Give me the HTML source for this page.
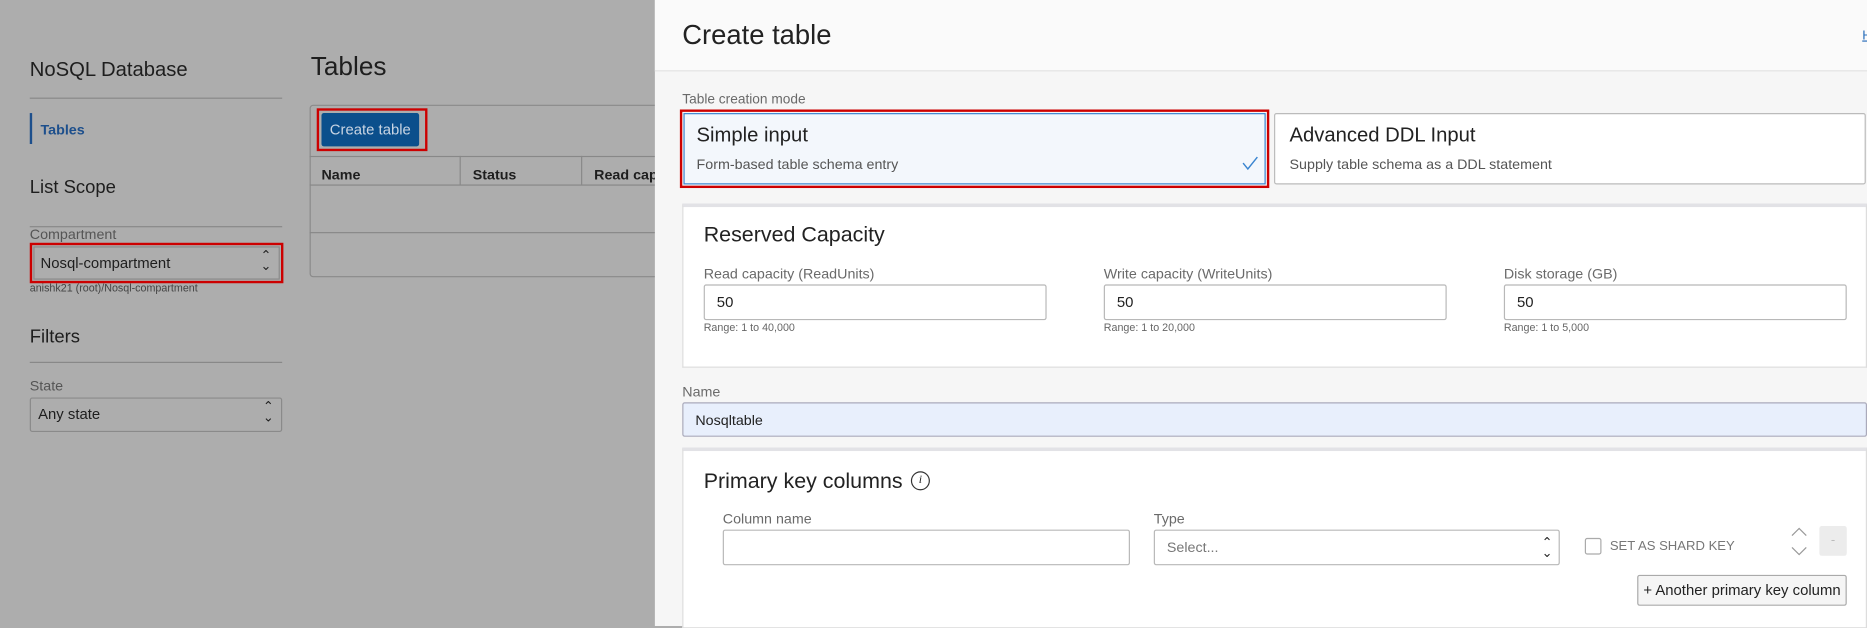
<!DOCTYPE html>
<html><head><meta charset="utf-8"><style>
*{box-sizing:border-box;margin:0;padding:0}
html,body{width:1867px;height:626px;overflow:hidden;background:#adadad;font-family:"Liberation Sans",Arial,sans-serif}
#s{position:absolute;left:0;top:0;width:1568px;height:526px;transform:scale(1.19069,1.1901);transform-origin:0 0}
.a{position:absolute;white-space:nowrap}
.ln{position:absolute;height:1px;background:#888}
.inp{position:absolute;background:#fff;border:1px solid #b8b8b8;border-radius:2px;font-size:12.5px;color:#222;padding-left:10px;display:flex;align-items:center}
.lbl{position:absolute;font-size:12px;color:#6a6a6a;white-space:nowrap}
.rng{position:absolute;font-size:9px;color:#666;white-space:nowrap}
.card{position:absolute;background:#fff;border:1px solid #ddd;border-top:3px solid #e2e2e6}
</style></head><body><div id="s">
<!-- left -->
<div class="a" style="left:25px;top:49px;font-size:17px;color:#1e1e1e">NoSQL Database</div>
<div class="ln" style="left:25px;top:82px;width:212px"></div>
<div class="a" style="left:25px;top:95px;width:2px;height:26px;background:#1d4f8c"></div>
<div class="a" style="left:34px;top:102px;font-size:12px;font-weight:bold;color:#1d4f8c">Tables</div>
<div class="a" style="left:25px;top:149px;font-size:15.5px;color:#1e1e1e">List Scope</div>
<div class="ln" style="left:25px;top:190px;width:212px"></div>
<div class="a" style="left:25px;top:190px;font-size:12px;color:#555">Compartment</div>
<div class="a" style="left:25px;top:204px;width:213px;height:34px;border:2px solid #c00"></div>
<div class="a" style="left:28px;top:207px;width:207px;height:28px;border:1px solid #8a8a8a;font-size:12.5px;color:#1e1e1e;padding:6px 0 0 5px">Nosql-compartment<span style="position:absolute;right:6px;top:3px;font-size:11px;line-height:9px;text-align:center">⌃<br>⌄</span></div>
<div class="a" style="left:25px;top:237px;font-size:9px;color:#444">anishk21 (root)/Nosql-compartment</div>
<div class="a" style="left:25px;top:275px;font-size:15.5px;color:#1e1e1e">Filters</div>
<div class="ln" style="left:25px;top:304px;width:212px"></div>
<div class="a" style="left:25px;top:317px;font-size:12px;color:#555">State</div>
<div class="a" style="left:25px;top:334px;width:212px;height:29px;border:1px solid #8a8a8a;border-radius:2px;font-size:12.5px;color:#1e1e1e;padding:6px 0 0 6px">Any state<span style="position:absolute;right:6px;top:3px;font-size:11px;line-height:9px">⌃<br>⌄</span></div>
<div class="a" style="left:261px;top:43px;font-size:22px;color:#1e1e1e">Tables</div>
<div class="a" style="left:260px;top:88px;width:300px;height:145px;border:1px solid #8a8a8a;border-radius:3px"></div>
<div class="ln" style="left:260px;top:155px;width:300px"></div>
<div class="ln" style="left:260px;top:195px;width:300px"></div>
<div class="ln" style="left:260px;top:131px;width:300px"></div>
<div class="a" style="left:386px;top:131px;width:1px;height:24px;background:#888"></div>
<div class="a" style="left:488px;top:131px;width:1px;height:24px;background:#888"></div>
<div class="a" style="left:270px;top:140px;font-size:12px;font-weight:bold;color:#1e1e1e">Name</div>
<div class="a" style="left:397px;top:140px;font-size:12px;font-weight:bold;color:#1e1e1e">Status</div>
<div class="a" style="left:499px;top:140px;font-size:12px;font-weight:bold;color:#1e1e1e">Read cap</div>
<div class="a" style="left:266px;top:91px;width:93px;height:36px;border:2px solid #c00"></div>
<div class="a" style="left:270px;top:95px;width:82px;height:28px;background:#0b4f8c;border-radius:2px;color:#c9d5e3;font-size:12.5px;text-align:center;line-height:28px">Create table</div>
<!-- panel -->
<div class="a" style="left:550px;top:0;width:1018px;height:526px;background:#f6f6f6"></div>
<div class="a" style="left:550px;top:0;width:1018px;height:60px;background:#fafafa;border-bottom:1px solid #e3e3e3"></div>
<div class="a" style="left:573px;top:16px;font-size:23px;color:#222">Create table</div>
<div class="a" style="left:1564px;top:24px;font-size:11px;color:#2a6ebb;text-decoration:underline">H</div>
<div class="lbl" style="left:573px;top:78px;font-size:11.5px">Table creation mode</div>
<div class="a" style="left:571px;top:92px;width:495px;height:66px;border:2px solid #c00"></div>
<div class="a" style="left:574px;top:95px;width:489px;height:60px;background:#f3f7fc;border:1px solid #3a85d0"></div>
<div class="a" style="left:585px;top:104px;font-size:17px;color:#222">Simple input</div>
<div class="a" style="left:585px;top:131px;font-size:12px;color:#555">Form-based table schema entry</div>
<svg class="a" style="left:1043px;top:131px" width="14" height="12" viewBox="0 0 14 12"><path d="M1 6l4 5 8-10" stroke="#3a85d0" fill="none" stroke-width="1.2"/></svg>
<div class="a" style="left:1070px;top:95px;width:497px;height:60px;background:#fff;border:1px solid #bbb;border-radius:2px"></div>
<div class="a" style="left:1083px;top:104px;font-size:17px;color:#222">Advanced DDL Input</div>
<div class="a" style="left:1083px;top:131px;font-size:12px;color:#555">Supply table schema as a DDL statement</div>
<div class="card" style="left:573px;top:171px;width:995px;height:138px"></div>
<div class="a" style="left:591px;top:187px;font-size:18px;color:#222">Reserved Capacity</div>
<div class="lbl" style="left:591px;top:223px">Read capacity (ReadUnits)</div>
<div class="inp" style="left:591px;top:239px;width:288px;height:30px">50</div>
<div class="rng" style="left:591px;top:270px">Range: 1 to 40,000</div>
<div class="lbl" style="left:927px;top:223px">Write capacity (WriteUnits)</div>
<div class="inp" style="left:927px;top:239px;width:288px;height:30px">50</div>
<div class="rng" style="left:927px;top:270px">Range: 1 to 20,000</div>
<div class="lbl" style="left:1263px;top:223px">Disk storage (GB)</div>
<div class="inp" style="left:1263px;top:239px;width:288px;height:30px">50</div>
<div class="rng" style="left:1263px;top:270px">Range: 1 to 5,000</div>
<div class="lbl" style="left:573px;top:322px">Name</div>
<div class="inp" style="left:573px;top:338px;width:995px;height:29px;background:#e8effc;border-color:#aab;font-size:12px">Nosqltable</div>
<div class="card" style="left:573px;top:376px;width:995px;height:152px"></div>
<div class="a" style="left:591px;top:394px;font-size:18px;color:#222">Primary key columns</div>
<div class="a" style="left:765px;top:396px;width:16px;height:16px;border:1px solid #333;border-radius:50%;font:italic 10px 'Liberation Serif',serif;text-align:center;line-height:14px;color:#222">i</div>
<div class="lbl" style="left:607px;top:429px">Column name</div>
<div class="inp" style="left:607px;top:445px;width:342px;height:30px"></div>
<div class="lbl" style="left:969px;top:429px">Type</div>
<div class="inp" style="left:969px;top:445px;width:341px;height:30px;color:#777;font-size:12px">Select...<span style="position:absolute;right:5px;top:6px;font-size:11px;line-height:9px;color:#222">⌃<br>⌄</span></div>
<div class="a" style="left:1331px;top:452px;width:14px;height:14px;border:1px solid #aaa;border-radius:2px;background:#fff"></div>
<div class="a" style="left:1352px;top:453px;font-size:11px;color:#777">SET AS SHARD KEY</div>
<svg class="a" style="left:1503px;top:442px" width="16" height="26" viewBox="0 0 16 26"><path d="M2 8l6-6 6 6M2 18l6 6 6-6" stroke="#999" fill="none"/></svg>
<div class="a" style="left:1528px;top:442px;width:23px;height:25px;background:#ececec;border-radius:2px;color:#bbb;font-size:11px;text-align:center;line-height:24px">-</div>
<div class="a" style="left:1375px;top:483px;width:176px;height:26px;background:#f5f5f5;border:1px solid #aaa;border-radius:2px;font-size:12.5px;color:#222;text-align:center;line-height:24px">+ Another primary key column</div>
</div></body></html>
